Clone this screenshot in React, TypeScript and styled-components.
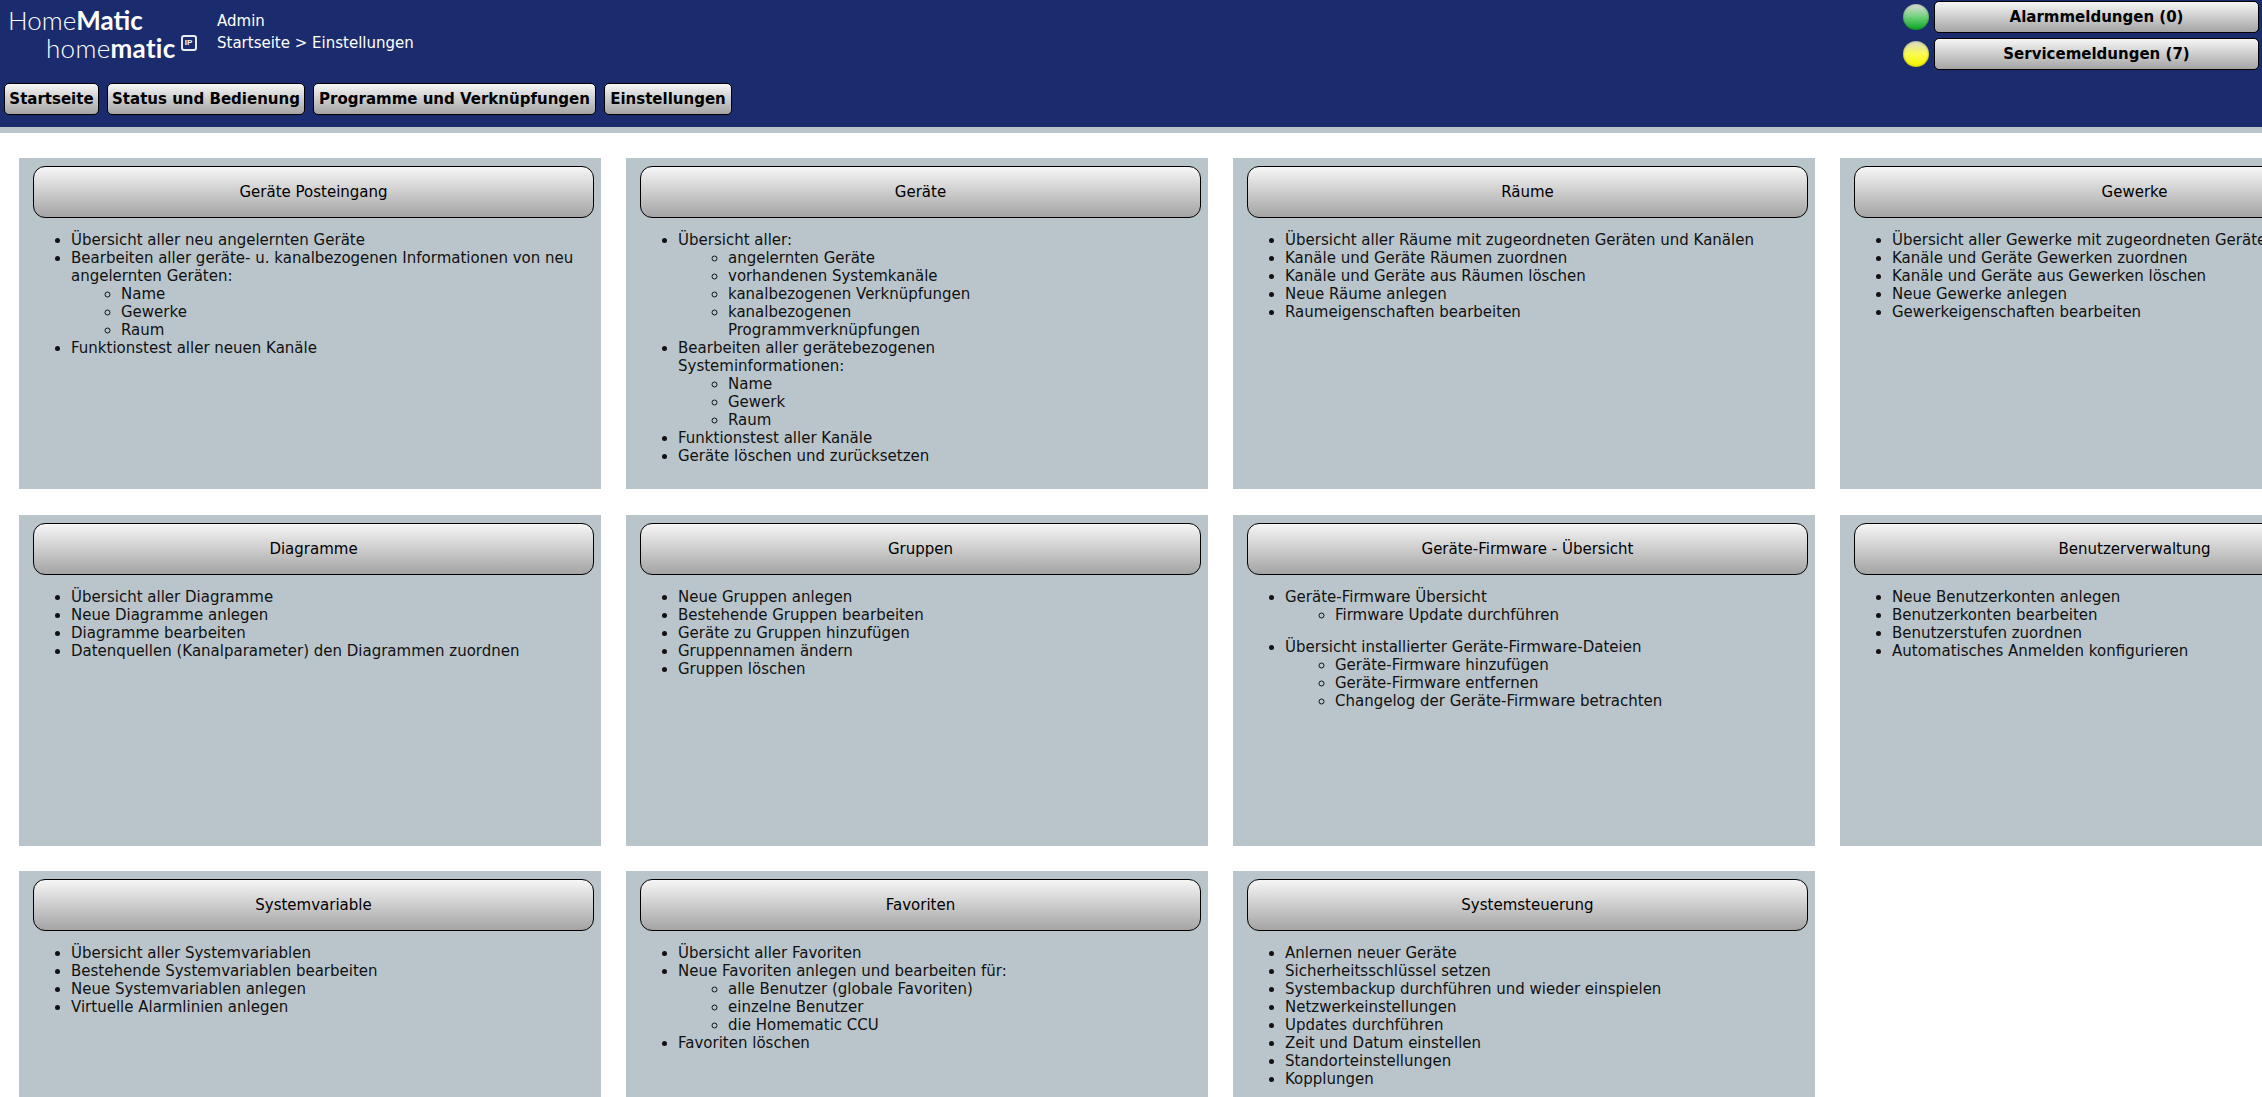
import React from "react";
import styled, { createGlobalStyle } from "styled-components";

const GlobalStyle = createGlobalStyle`
  html, body {
    margin: 0;
    padding: 0;
    height: 100%;
    overflow: hidden;
    background: #fff;
    font-family: "DejaVu Sans", Verdana, sans-serif;
    color: #000;
  }
`;

const Page = styled.div`
  width: 2262px;
  height: 1097px;
  overflow: hidden;
`;

const Header = styled.header`
  box-sizing: border-box;
  height: 133px;
  background: #1a2c6e;
  border-bottom: 6px solid #b9c5cb;
  display: flex;
  justify-content: space-between;
`;

const HeaderLeft = styled.div`
  display: flex;
  flex-direction: column;
`;

const TopRow = styled.div`
  display: flex;
  height: 83px;
`;

const Logo = styled.div`
  box-sizing: border-box;
  width: 217px;
  padding: 6px 0 0 8px;
  color: #fff;
  font-family: "Lato", sans-serif;
  font-weight: 300;
  font-size: 26px;
  line-height: 28px;
`;

const LogoLine = styled.div<{ $indent?: number; $spacing?: number }>`
  display: flex;
  align-items: flex-start;
  padding-left: ${(p) => p.$indent ?? 0}px;
  letter-spacing: ${(p) => p.$spacing ?? 0}px;
  b {
    font-weight: 700;
  }
`;

const IpBadge = styled.span`
  box-sizing: border-box;
  width: 16px;
  height: 16px;
  margin: 1px 0 0 5px;
  border: 2px solid #e8ebf3;
  border-radius: 3px;
  font-size: 8px;
  line-height: 12px;
  font-weight: 700;
  letter-spacing: 0;
  text-align: center;
  font-family: "Liberation Sans", sans-serif;
`;

const Crumbs = styled.div`
  padding-top: 11px;
  color: #fff;
  font-size: 15px;
  line-height: 21.5px;
`;

const Nav = styled.nav`
  display: flex;
  gap: 8px;
  padding-left: 4px;
`;

const chrome = `
  box-sizing: border-box;
  background: linear-gradient(#f6f6f6, #a4a4a4);
  border: 1px solid #000;
  color: #000;
`;

const NavButton = styled.div<{ $width: number }>`
  ${chrome}
  width: ${(p) => p.$width}px;
  height: 32px;
  border-radius: 5px;
  font-size: 15px;
  font-weight: 700;
  line-height: 30px;
  text-align: center;
  white-space: nowrap;
`;

const Alerts = styled.div`
  display: flex;
  flex-direction: column;
  gap: 5px;
  padding: 1px 3px 0 0;
`;

const AlertRow = styled.div`
  display: flex;
  align-items: center;
  gap: 5px;
`;

const Led = styled.span<{ $top: string; $mid: string; $low: string }>`
  width: 26px;
  height: 26px;
  border-radius: 50%;
  background: linear-gradient(${(p) => p.$top} 5%, ${(p) => p.$mid} 50%, ${(p) => p.$low} 95%);
  box-shadow: inset 0 0 2px rgba(60, 60, 40, 0.7);
`;

const AlertButton = styled.div`
  ${chrome}
  width: 325px;
  height: 32px;
  border-radius: 5px;
  font-size: 15px;
  font-weight: 700;
  line-height: 30px;
  text-align: center;
`;

const Grid = styled.main`
  display: grid;
  grid-template-columns: repeat(4, 582px);
  grid-auto-rows: 331px;
  gap: 25.5px 25px;
  padding: 25px 0 0 19px;
`;

const Card = styled.section`
  box-sizing: border-box;
  background: #b9c5cb;
  padding: 8px 0 0 14px;
  overflow: hidden;
`;

const CardButton = styled.div`
  ${chrome}
  width: 561px;
  height: 52px;
  border-radius: 12px;
  font-size: 15px;
  line-height: 51px;
  text-align: center;
`;

const Body = styled.div`
  width: 561px;
  padding-top: 13px;
  font-size: 15px;
  line-height: 18px;
  color: #111;
`;

const Bullets = styled.ul<{ $gapAfter?: boolean }>`
  margin: 0 0 ${(p) => (p.$gapAfter ? "14px" : "0")};
  padding: 0 0 0 38px;
  list-style: disc;
  white-space: pre-line;
`;

const SubBullets = styled.ul`
  margin: 0;
  padding: 0 0 0 50px;
  list-style: circle;
`;

const Wide = styled.li`
  white-space: nowrap;
`;

type Item = string | { text: string; sub: string[] };
type CardData = { title: string; lists: Item[][]; nowrap?: boolean };

const cards: CardData[] = [
  {
    title: "Geräte Posteingang",
    lists: [[
      "Übersicht aller neu angelernten Geräte",
      { text: "Bearbeiten aller geräte- u. kanalbezogenen Informationen von neu angelernten Geräten:", sub: ["Name", "Gewerke", "Raum"] },
      "Funktionstest aller neuen Kanäle",
    ]],
  },
  {
    title: "Geräte",
    lists: [[
      { text: "Übersicht aller:", sub: ["angelernten Geräte", "vorhandenen Systemkanäle", "kanalbezogenen Verknüpfungen", "kanalbezogenen\nProgrammverknüpfungen"] },
      { text: "Bearbeiten aller gerätebezogenen\nSysteminformationen:", sub: ["Name", "Gewerk", "Raum"] },
      "Funktionstest aller Kanäle",
      "Geräte löschen und zurücksetzen",
    ]],
  },
  {
    title: "Räume",
    lists: [[
      "Übersicht aller Räume mit zugeordneten Geräten und Kanälen",
      "Kanäle und Geräte Räumen zuordnen",
      "Kanäle und Geräte aus Räumen löschen",
      "Neue Räume anlegen",
      "Raumeigenschaften bearbeiten",
    ]],
  },
  {
    title: "Gewerke",
    nowrap: true,
    lists: [[
      "Übersicht aller Gewerke mit zugeordneten Geräten und Kanälen",
      "Kanäle und Geräte Gewerken zuordnen",
      "Kanäle und Geräte aus Gewerken löschen",
      "Neue Gewerke anlegen",
      "Gewerkeigenschaften bearbeiten",
    ]],
  },
  {
    title: "Diagramme",
    lists: [[
      "Übersicht aller Diagramme",
      "Neue Diagramme anlegen",
      "Diagramme bearbeiten",
      "Datenquellen (Kanalparameter) den Diagrammen zuordnen",
    ]],
  },
  {
    title: "Gruppen",
    lists: [[
      "Neue Gruppen anlegen",
      "Bestehende Gruppen bearbeiten",
      "Geräte zu Gruppen hinzufügen",
      "Gruppennamen ändern",
      "Gruppen löschen",
    ]],
  },
  {
    title: "Geräte-Firmware - Übersicht",
    lists: [
      [{ text: "Geräte-Firmware Übersicht", sub: ["Firmware Update durchführen"] }],
      [{ text: "Übersicht installierter Geräte-Firmware-Dateien", sub: ["Geräte-Firmware hinzufügen", "Geräte-Firmware entfernen", "Changelog der Geräte-Firmware betrachten"] }],
    ],
  },
  {
    title: "Benutzerverwaltung",
    lists: [[
      "Neue Benutzerkonten anlegen",
      "Benutzerkonten bearbeiten",
      "Benutzerstufen zuordnen",
      "Automatisches Anmelden konfigurieren",
    ]],
  },
  {
    title: "Systemvariable",
    lists: [[
      "Übersicht aller Systemvariablen",
      "Bestehende Systemvariablen bearbeiten",
      "Neue Systemvariablen anlegen",
      "Virtuelle Alarmlinien anlegen",
    ]],
  },
  {
    title: "Favoriten",
    lists: [[
      "Übersicht aller Favoriten",
      { text: "Neue Favoriten anlegen und bearbeiten für:", sub: ["alle Benutzer (globale Favoriten)", "einzelne Benutzer", "die Homematic CCU"] },
      "Favoriten löschen",
    ]],
  },
  {
    title: "Systemsteuerung",
    lists: [[
      "Anlernen neuer Geräte",
      "Sicherheitsschlüssel setzen",
      "Systembackup durchführen und wieder einspielen",
      "Netzwerkeinstellungen",
      "Updates durchführen",
      "Zeit und Datum einstellen",
      "Standorteinstellungen",
      "Kopplungen",
    ]],
  },
];

const navItems = [
  { label: "Startseite", width: 95 },
  { label: "Status und Bedienung", width: 198 },
  { label: "Programme und Verknüpfungen", width: 283 },
  { label: "Einstellungen", width: 128 },
];

function renderItem(item: Item, i: number, nowrap?: boolean) {
  const Li = nowrap ? Wide : "li";
  if (typeof item === "string") return <Li key={i}>{item}</Li>;
  return (
    <Li key={i}>
      {item.text}
      <SubBullets>
        {item.sub.map((s) => (
          <li key={s}>{s}</li>
        ))}
      </SubBullets>
    </Li>
  );
}

export default function App() {
  return (
    <Page>
      <GlobalStyle />
      <Header>
        <HeaderLeft>
          <TopRow>
            <Logo>
              <LogoLine>
                Home<b>Matic</b>
              </LogoLine>
              <LogoLine $indent={38} $spacing={0.3}>
                home<b>matic</b>
                <IpBadge>IP</IpBadge>
              </LogoLine>
            </Logo>
            <Crumbs>
              <div>Admin</div>
              <div>Startseite &gt; Einstellungen</div>
            </Crumbs>
          </TopRow>
          <Nav>
            {navItems.map((n) => (
              <NavButton key={n.label} $width={n.width}>{n.label}</NavButton>
            ))}
          </Nav>
        </HeaderLeft>
        <Alerts>
          <AlertRow>
            <Led $top="#d4dcd4" $mid="#6fd07a" $low="#0fa82a" />
            <AlertButton>Alarmmeldungen (0)</AlertButton>
          </AlertRow>
          <AlertRow>
            <Led $top="#dcdcc0" $mid="#fbfb50" $low="#f2f200" />
            <AlertButton>Servicemeldungen (7)</AlertButton>
          </AlertRow>
        </Alerts>
      </Header>
      <Grid>
        {cards.map((c) => (
          <Card key={c.title}>
            <CardButton>{c.title}</CardButton>
            <Body>
              {c.lists.map((list, i) => (
                <Bullets key={i} $gapAfter={i < c.lists.length - 1}>
                  {list.map((item, j) => renderItem(item, j, c.nowrap))}
                </Bullets>
              ))}
            </Body>
          </Card>
        ))}
      </Grid>
    </Page>
  );
}
